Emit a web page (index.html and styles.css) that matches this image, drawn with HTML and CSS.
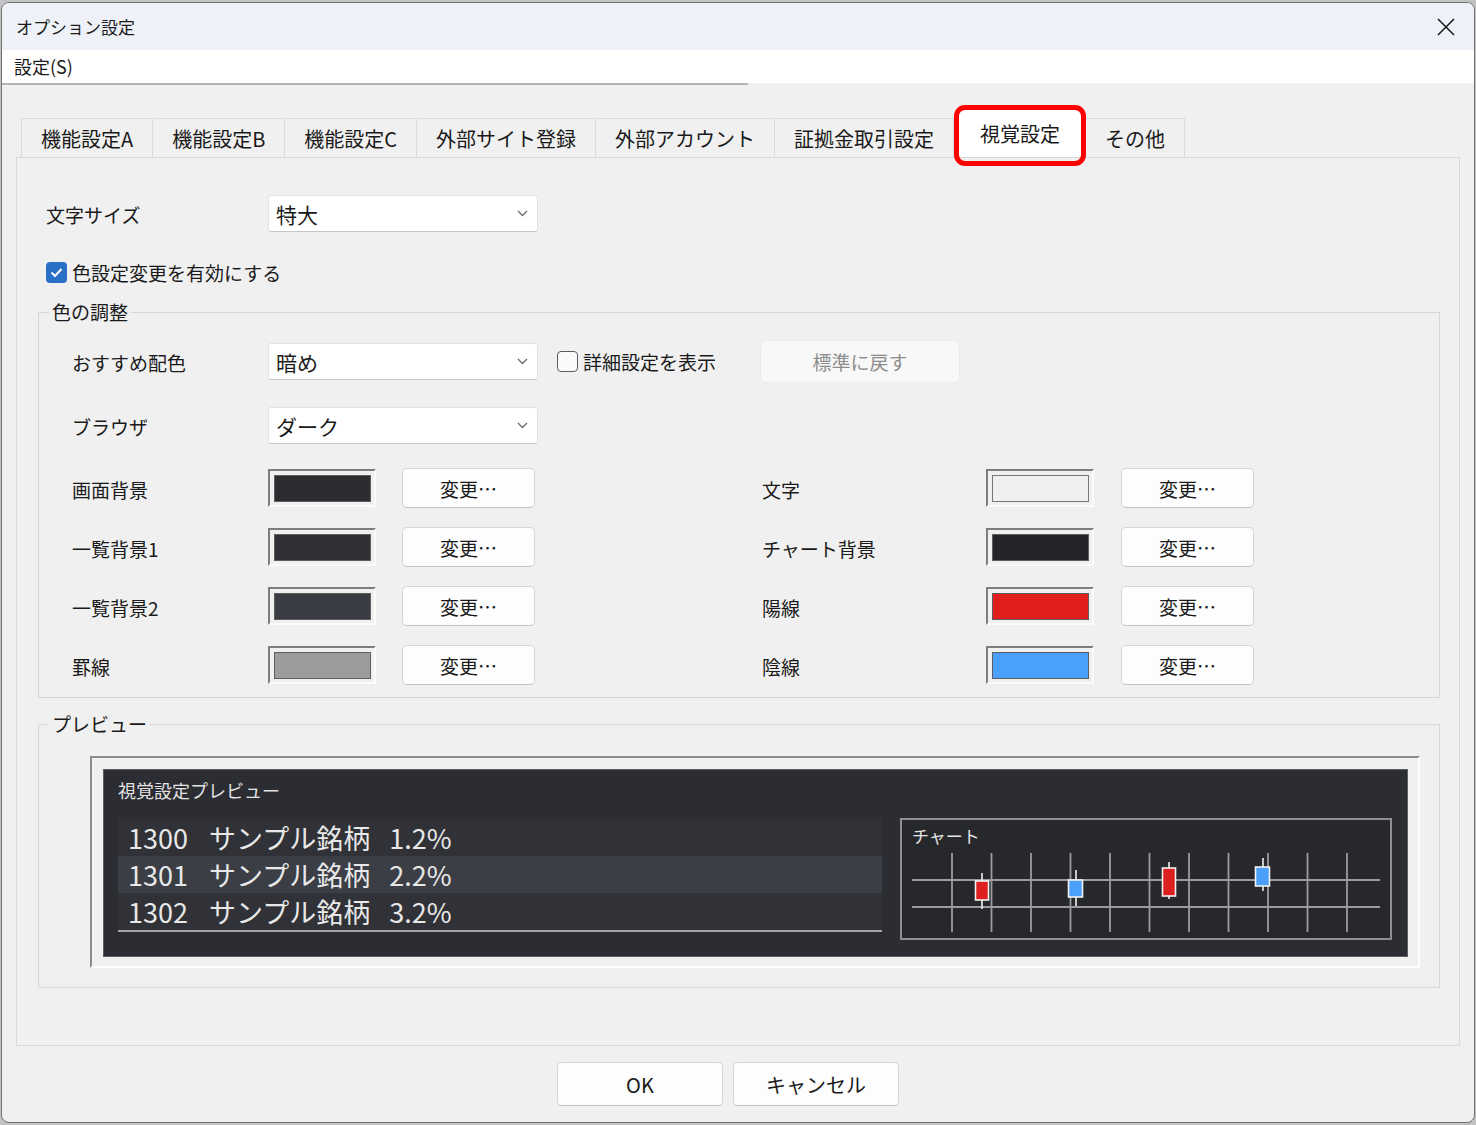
FILE: index.html
```html
<!DOCTYPE html>
<html lang="ja">
<head>
  <meta charset="UTF-8" />
  <title>オプション設定</title>
  <link rel="stylesheet" href="styles.css">
</head>
<body>
  <div class="window">
    <div class="titlebar">
      <span>オプション設定</span>
      <svg class="close" width="18" height="18" viewBox="0 0 18 18"><path d="M1 1 L17 17 M17 1 L1 17" stroke="#1e1e1e" stroke-width="1.6" fill="none"/></svg>
    </div>
    <div class="menubar">設定(S)</div>
    <div class="menu-line"></div>

    <div class="content">
      <div class="tabs">
        <div class="tab">機能設定A</div>
        <div class="tab">機能設定B</div>
        <div class="tab">機能設定C</div>
        <div class="tab">外部サイト登録</div>
        <div class="tab">外部アカウント</div>
        <div class="tab">証拠金取引設定</div>
        <div class="tab active">視覚設定</div>
        <div class="tab">その他</div>
      </div>

      <div class="panel">
        <div class="top-row">
          <span class="label wide">文字サイズ</span>
          <div class="select">特大
            <svg width="11" height="7" viewBox="0 0 11 7"><path d="M1 1 L5.5 5.5 L10 1" stroke="#6a6a6a" stroke-width="1.3" fill="none"/></svg>
          </div>
        </div>

        <div class="check-row">
          <span class="checkbox checked">
            <svg width="21" height="21" viewBox="0 0 21 21"><path d="M5.5 10.5 L9 14 L15.5 7" stroke="#fff" stroke-width="2" fill="none"/></svg>
          </span>
          色設定変更を有効にする
        </div>

        <fieldset class="group colors-group">
          <legend>色の調整</legend>

          <div class="row">
            <span class="label">おすすめ配色</span>
            <div class="select">暗め
              <svg width="11" height="7" viewBox="0 0 11 7"><path d="M1 1 L5.5 5.5 L10 1" stroke="#6a6a6a" stroke-width="1.3" fill="none"/></svg>
            </div>
            <div class="detail-check">
              <span class="checkbox"></span>詳細設定を表示
            </div>
            <button class="btn reset" disabled>標準に戻す</button>
          </div>

          <div class="row browser-row">
            <span class="label">ブラウザ</span>
            <div class="select">ダーク
              <svg width="11" height="7" viewBox="0 0 11 7"><path d="M1 1 L5.5 5.5 L10 1" stroke="#6a6a6a" stroke-width="1.3" fill="none"/></svg>
            </div>
          </div>

          <div class="colors">
            <div class="color-item">
              <span class="label">画面背景</span>
              <span class="swatch"><span class="c-screen"></span></span>
              <button class="btn change">変更…</button>
            </div>
            <div class="color-item">
              <span class="label">文字</span>
              <span class="swatch"><span class="c-text"></span></span>
              <button class="btn change">変更…</button>
            </div>
            <div class="color-item">
              <span class="label">一覧背景1</span>
              <span class="swatch"><span class="c-list1"></span></span>
              <button class="btn change">変更…</button>
            </div>
            <div class="color-item">
              <span class="label">チャート背景</span>
              <span class="swatch"><span class="c-chart"></span></span>
              <button class="btn change">変更…</button>
            </div>
            <div class="color-item">
              <span class="label">一覧背景2</span>
              <span class="swatch"><span class="c-list2"></span></span>
              <button class="btn change">変更…</button>
            </div>
            <div class="color-item">
              <span class="label">陽線</span>
              <span class="swatch"><span class="c-up"></span></span>
              <button class="btn change">変更…</button>
            </div>
            <div class="color-item">
              <span class="label">罫線</span>
              <span class="swatch"><span class="c-rule"></span></span>
              <button class="btn change">変更…</button>
            </div>
            <div class="color-item">
              <span class="label">陰線</span>
              <span class="swatch"><span class="c-down"></span></span>
              <button class="btn change">変更…</button>
            </div>
          </div>
        </fieldset>

        <fieldset class="group preview-group">
          <legend>プレビュー</legend>
          <div class="frame">
            <div class="preview">
              <div class="preview-title">視覚設定プレビュー</div>
              <div class="preview-body">
                <div class="list">
                  <div class="list-row"><span>1300</span><span class="name">サンプル銘柄</span><span class="pct">1.2%</span></div>
                  <div class="list-row alt"><span>1301</span><span class="name">サンプル銘柄</span><span class="pct">2.2%</span></div>
                  <div class="list-row"><span>1302</span><span class="name">サンプル銘柄</span><span class="pct">3.2%</span></div>
                </div>
                <div class="chart">
                  <svg width="492" height="122" viewBox="0 0 492 122">
                    <rect x="1" y="1" width="490" height="120" fill="#26282c" stroke="#8f9093" stroke-width="2"/>
                    <g stroke="#9c9c9c" stroke-width="1.8">
                      <line x1="12" y1="62" x2="480" y2="62"/>
                      <line x1="12" y1="89" x2="480" y2="89"/>
                      <line x1="52" y1="35" x2="52" y2="114"/>
                      <line x1="91.5" y1="35" x2="91.5" y2="114"/>
                      <line x1="131" y1="35" x2="131" y2="114"/>
                      <line x1="170.5" y1="35" x2="170.5" y2="114"/>
                      <line x1="210" y1="35" x2="210" y2="114"/>
                      <line x1="249.5" y1="35" x2="249.5" y2="114"/>
                      <line x1="289" y1="35" x2="289" y2="114"/>
                      <line x1="328.5" y1="35" x2="328.5" y2="114"/>
                      <line x1="368" y1="35" x2="368" y2="114"/>
                      <line x1="407.5" y1="35" x2="407.5" y2="114"/>
                      <line x1="447" y1="35" x2="447" y2="114"/>
                    </g>
                    <g stroke="#f2f2f2" stroke-width="1.6">
                      <line x1="82" y1="55" x2="82" y2="91"/>
                      <rect x="75.5" y="63" width="13" height="19" fill="#de1f1f"/>
                      <line x1="176" y1="52" x2="176" y2="88"/>
                      <rect x="168.5" y="62" width="14" height="17" fill="#4aa0fa"/>
                      <line x1="269" y1="44" x2="269" y2="81"/>
                      <rect x="262.5" y="50" width="13" height="28" fill="#de1f1f"/>
                      <line x1="363" y1="40" x2="363" y2="73"/>
                      <rect x="355.5" y="49" width="14" height="19" fill="#4aa0fa"/>
                    </g>
                  </svg>
                  <span class="chart-title">チャート</span>
                </div>
              </div>
            </div>
          </div>
        </fieldset>
      </div>

      <div class="footer">
        <button class="btn footer-btn">OK</button>
        <button class="btn footer-btn">キャンセル</button>
      </div>
    </div>
  </div>
</body>
</html>
```

FILE: styles.css
```css
html, body {
  margin: 0;
  padding: 0;
}
body {
  background: #c2c2c2;
  font-family: "Noto Sans CJK JP", "Noto Sans", sans-serif;
  color: #1a1a1a;
  width: 1476px;
  height: 1125px;
  overflow: hidden;
}
.window {
  margin: 2px 1px 0 1px;
  height: 1121px;
  box-sizing: border-box;
  border: 1px solid #707070;
  border-radius: 8px;
  overflow: hidden;
  background: #f0f0f0;
  display: flex;
  flex-direction: column;
}
.titlebar {
  height: 47px;
  flex: none;
  background: #eef2f8;
  display: flex;
  align-items: center;
  justify-content: space-between;
  padding: 0 19px 0 14px;
  font-size: 17px;
  line-height: 22px;
}
.menubar {
  height: 33px;
  flex: none;
  background: #fff;
  padding-left: 12px;
  font-size: 18px;
  line-height: 33px;
}
.menu-line {
  flex: none;
  width: 746px;
  height: 2px;
  background: #b4b4b4;
}
.content {
  flex: 1;
  display: flex;
  flex-direction: column;
  padding: 0 14px;
}
.tabs {
  flex: none;
  display: flex;
  align-items: flex-end;
  height: 39px;
  margin: 33px 0 0 6px;
  position: relative;
  z-index: 2;
}
.tab {
  height: 39px;
  box-sizing: border-box;
  padding: 0 19px;
  border: 1px solid #dcdcdc;
  border-bottom: none;
  margin-left: -1px;
  font-size: 20px;
  line-height: 39px;
  white-space: nowrap;
}
.tab.active {
  height: 47px;
  line-height: 46px;
  padding: 0 21px;
  margin: 0 4px;
  background: #fff;
  border-color: #fff;
  position: relative;
}
.tab.active::after {
  content: "";
  position: absolute;
  top: -6px;
  left: -5px;
  right: -5px;
  bottom: -9px;
  border: 5px solid #ff0000;
  border-radius: 11px;
}
.panel {
  flex: 1;
  border: 1px solid #d9d9d9;
  background: #f0f0f0;
  padding: 0 19px 0 21px;
}
.top-row {
  display: flex;
  align-items: center;
  margin-top: 37px;
  padding-left: 8px;
}
.label {
  font-size: 19px;
  line-height: 24px;
  width: 196px;
  flex: none;
  padding-top: 3px;
}
.label.wide {
  width: 222px;
}
.select {
  width: 270px;
  height: 37px;
  box-sizing: border-box;
  background: #fff;
  border: 1px solid #e2e2e2;
  border-bottom-color: #c6c6c6;
  border-radius: 3px;
  display: flex;
  align-items: center;
  justify-content: space-between;
  padding: 0 9px 0 7px;
  font-size: 21px;
  flex: none;
}
.check-row {
  display: flex;
  align-items: center;
  margin-top: 28px;
  padding-left: 8px;
  height: 24px;
  font-size: 19px;
}
.checkbox {
  width: 21px;
  height: 21px;
  box-sizing: border-box;
  border: 1.5px solid #5c5c5c;
  border-radius: 4px;
  background: #fafafa;
  margin-right: 5px;
  flex: none;
  display: inline-flex;
}
.checkbox.checked {
  background: #2a6fc6;
  border: none;
}
.group {
  margin: 0;
  min-width: 0;
  border: 1px solid #d6d6d6;
}
.group legend {
  font-size: 19px;
  line-height: 24px;
  padding: 0 3px;
}
.colors-group {
  margin-top: 16px;
  padding: 16px 0 12px 33px;
}
.colors-group legend {
  margin-left: -23px;
}
.row {
  display: flex;
  align-items: center;
  height: 43px;
}
.browser-row {
  height: 37px;
  margin-top: 24px;
}
.detail-check {
  display: flex;
  align-items: center;
  width: 203px;
  padding-left: 19px;
  font-size: 19px;
}
.btn {
  font-family: inherit;
  color: #1a1a1a;
  background: #fdfdfd;
  border: 1px solid #d6d6d6;
  border-bottom-color: #c2c2c2;
  border-radius: 5px;
  padding: 0;
}
.reset {
  width: 200px;
  height: 43px;
  font-size: 19px;
  color: #8d8d8d;
  background: #f8f8f8;
  border-color: #ececec;
}
.colors {
  display: grid;
  grid-template-columns: 690px auto;
  row-gap: 19px;
  margin-top: 24px;
}
.color-item {
  display: flex;
  align-items: center;
  height: 40px;
}
.color-item:nth-child(even) .label {
  width: 224px;
}
.swatch {
  width: 108px;
  height: 38px;
  box-sizing: border-box;
  border: 2px solid;
  border-color: #7d7d7d #fbfbfb #fbfbfb #7d7d7d;
  padding: 4px 3px 3px 4px;
  flex: none;
  display: flex;
}
.swatch span {
  flex: 1;
  border: 1px solid #5e5e5e;
}
.c-screen { background: #2b2d31; }
.c-list1 { background: #2f3136; }
.c-list2 { background: #3a3c43; }
.c-rule { background: #9b9c9e; }
.c-text { background: #f0f0f0; border-color: #777 !important; }
.c-chart { background: #232427; }
.c-up { background: #e01e1e; }
.c-down { background: #4aa0fa; }
.change {
  width: 133px;
  height: 40px;
  margin-left: 26px;
  font-size: 19px;
}
.color-item:nth-child(even) .change {
  margin-left: 27px;
}
.preview-group {
  margin-top: 14px;
  padding: 20px 19px 19px 51px;
}
.preview-group legend {
  margin-left: -41px;
}
.frame {
  border: 2px solid;
  border-color: #8c8c8c #fdfdfd #fdfdfd #8c8c8c;
  padding: 11px 10px 9px 11px;
}
.preview {
  background: #2b2d32;
  border: 1px solid #5b5e63;
  padding: 8px 15px 16px 14px;
  color: #e2e2e2;
}
.preview-title {
  font-size: 18px;
  line-height: 24px;
}
.preview-body {
  display: flex;
  align-items: flex-start;
  gap: 18px;
  margin-top: 16px;
}
.list {
  width: 764px;
  margin-top: 1px;
  border-bottom: 2px solid #a3a3a3;
}
.list-row {
  height: 37px;
  background: #303237;
  padding-left: 10px;
  font-size: 27px;
  line-height: 37px;
  color: #e8e8e8;
  white-space: nowrap;
}
.list-row.alt {
  background: #3b3e45;
}
.list-row .name {
  margin-left: 21px;
}
.list-row .pct {
  margin-left: 19px;
}
.chart {
  width: 492px;
  height: 122px;
  position: relative;
  flex: none;
}
.chart svg {
  position: absolute;
  left: 0;
  top: 0;
}
.chart-title {
  position: relative;
  display: block;
  padding: 7px 0 0 12px;
  font-size: 17px;
  line-height: 22px;
  color: #e6e6e6;
}
.footer {
  height: 76px;
  flex: none;
  display: flex;
  justify-content: center;
  gap: 10px;
  padding: 16px 20px 0 0;
  box-sizing: border-box;
}
.footer-btn {
  width: 166px;
  height: 44px;
  font-size: 20px;
  background: #fdfdfd;
}
```
